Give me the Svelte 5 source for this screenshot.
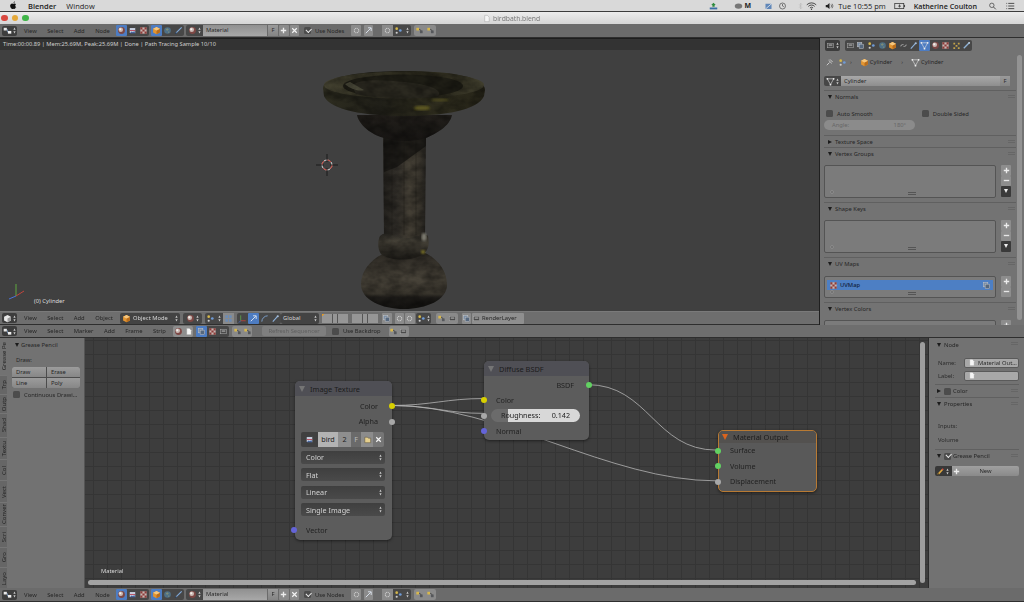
<script>
  const tabs3d = [
    { t: 'Grease Pe', h: 38 },
    { t: 'Trp', h: 19 },
    { t: 'Outp', h: 19 },
    { t: 'Shad', h: 24 },
    { t: 'Textu', h: 22 },
    { t: 'Col', h: 21 },
    { t: 'Vect', h: 22 },
    { t: 'Conver', h: 24 },
    { t: 'Scri', h: 21 },
    { t: 'Gro', h: 20 },
    { t: 'Layo', h: 22 }
  ];
  const propTabs = ['render', 'layers', 'scene', 'globe', 'cube', 'link', 'wrench', 'mesh', 'ball', 'check', 'parts', 'bone'];
  const dropdowns = ['Color', 'Flat', 'Linear', 'Single Image'];
  const menuNode = ['View', 'Select', 'Add', 'Node'];
  const menu3d = ['View', 'Select', 'Add', 'Object'];
  const menuSeq = ['View', 'Select', 'Marker', 'Add', 'Frame', 'Strip'];

  // silhouettes of the birdbath, shared by the fills and the grain clip
  const basePath = 'M361 284C361 268 376 254 394 250H416C434 254 447 268 447 285 447 300 426 309 404 309 382 309 361 300 361 284Z';
  const colPath = 'M383 136H426L425 238H384Z';
  const ringPath = 'M380 236C386 230 392 236 404 238 416 239 424 232 428 236 430 246 428 252 420 256 406 262 388 260 381 254 377 248 378 240 380 236Z';
  const underPath = 'M357 115C360 128 376 136 384 138 396 142 414 142 426 138 436 134 450 126 452 115Z';
  const rimPath = 'M323 88C323 77 360 71 404 71 452 71 485 77 485 90L484 96C478 110 445 116 404 116 365 116 330 110 324 96Z';
</script>

{#snippet icon(k)}
  <svg class="ic" viewBox="0 0 10 10">
    {#if k === 'ball'}
      <circle cx="5" cy="5" r="3.8" fill="#7d4744" /><circle cx="4.200" cy="4.200" r="2.500" fill="#c9b9b4" /><circle cx="3.600" cy="3.600" r="1.100" fill="#f4f0ec" />
    {:else if k === 'img'}
      <rect x="1.5" y="2" width="7" height="6" fill="#c7cede" stroke="#222" stroke-width=".5" /><path d="M2 8l2-2 1.500 1 1.500-1.500L8 8z" fill="#44639e" /><path d="M2 4.500h6v1H2z" fill="#b9485a" />
    {:else if k === 'check'}
      <rect x="1.5" y="1.5" width="7" height="7" fill="#c9b4b0" /><path d="M1.5 1.5h2.3v2.3H1.5zM6.2 1.5h2.3v2.3H6.2zM3.8 3.8h2.4v2.4H3.8zM1.5 6.2h2.3v2.3H1.5zM6.2 6.2h2.3v2.3H6.2z" fill="#8c3c3a" />
    {:else if k === 'cube'}
      <path d="M5 1l3.8 2v4.2L5 9.2 1.2 7.200V3z" fill="#e29532" /><path d="M5 5l3.8-2v4.200L5 9.200z" fill="#b96d1c" /><path d="M5 1l3.800 2L5 5 1.200 3z" fill="#f6c77e" />
    {:else if k === 'globe'}
      <circle cx="5" cy="5" r="3.700" fill="#4e6f86" /><path d="M3 3.500l2-1 1.500 1.500-2 1.500zM5.500 6l2 .5-1.500 1.500z" fill="#7d8d78" />
    {:else if k === 'brush'}
      <path d="M1.500 8.500L8.500 1.500" stroke="#7fa8d8" stroke-width="1.300" /><circle cx="2" cy="8" r="1" fill="#2f3f55" />
    {:else if k === 'plus'}
      <path d="M5 2v6M2 5h6" stroke="#ececec" stroke-width="1.500" />
    {:else if k === 'cross'}
      <path d="M2.500 2.500l5 5M7.500 2.500l-5 5" stroke="#f4f4f4" stroke-width="1.300" />
    {:else if k === 'minus'}
      <path d="M2 5h6" stroke="#e6e6e6" stroke-width="1.500" />
    {:else if k === 'link'}
      <path d="M2 6a2 2 0 0 1 2-2h1M8 4a2 2 0 0 1-2 2H5" fill="none" stroke="#bbb" stroke-width=".9" />
    {:else if k === 'wrench'}
      <path d="M2 8.500L7 3" stroke="#8eb2dc" stroke-width="1.200" /><circle cx="7.500" cy="2.500" r="1.200" fill="#a8c0dc" />
    {:else if k === 'mesh'}
      <path d="M1.500 2h7L5 8.500z" fill="none" stroke="#e0e0e0" stroke-width=".7" /><circle cx="1.500" cy="2" r="1" fill="#eee" /><circle cx="8.500" cy="2" r="1" fill="#eee" /><circle cx="5" cy="8.500" r="1" fill="#eee" />
    {:else if k === 'scene'}
      <circle cx="3" cy="3" r="1.500" fill="#d6b84a" /><circle cx="7" cy="5" r="1.500" fill="#6f9bd6" /><circle cx="3" cy="7.500" r="1.200" fill="#cfcfcf" />
    {:else if k === 'render'}
      <rect x="1.500" y="2.500" width="7" height="5" fill="#4a4a4a" stroke="#aaa" stroke-width=".6" /><rect x="3" y="4" width="4" height="1" fill="#ccc" />
    {:else if k === 'layers'}
      <rect x="1.500" y="1.500" width="5" height="5" fill="#7a8ea6" stroke="#ccc" stroke-width=".5" /><rect x="3.500" y="3.500" width="5" height="5" fill="#56687e" stroke="#ccc" stroke-width=".5" />
    {:else if k === 'parts'}
      <path d="M1.500 2h2v2h-2zM6.500 2h2v2h-2zM4 4.500h2v2H4zM1.500 7h2v2h-2zM6.500 7h2v2h-2z" fill="#c2a24a" />
    {:else if k === 'bone'}
      <path d="M2 8L8 2" stroke="#8fb2d6" stroke-width="1.500" /><circle cx="8" cy="2" r="1" fill="#c4d6e8" />
    {:else if k === 'grid'}
      <path d="M1.500 1.500h3v3h-3zM5.500 1.500h3v3h-3zM1.500 5.500h3v3h-3zM5.500 5.500h3v3h-3z" fill="#6d8cb4" />
    {:else if k === 'axes'}
      <path d="M3 7.500L3 1.500" stroke="#5a9c4a" stroke-width="1" /><path d="M3 7.500h5.500" stroke="#b8423c" stroke-width="1" /><path d="M3 7.500L1 9.500" stroke="#4a6cc4" stroke-width="1" />
    {:else if k === 'arrow'}
      <path d="M2 8L7.500 2.500M4.500 2h3.500v3.500" fill="none" stroke="#dfe6f2" stroke-width="1" />
    {:else if k === 'curve'}
      <path d="M2 8.500C2 5 5 2 8.500 2" fill="none" stroke="#7fa5d2" stroke-width="1" />
    {:else if k === 'gear'}
      <circle cx="5" cy="5" r="2.500" fill="none" stroke="#c8c8c8" stroke-width="1.200" stroke-dasharray="1.200 .6" />
    {:else if k === 'pin'}
      <path d="M2 8l3-3M4 2.500l3.500 3.500M5.500 1.500l3 3" stroke="#ddd" stroke-width=".9" />
    {:else if k === 'yellow'}
      <path d="M1.500 2h3v3h-3z" fill="#d8b84c" /><path d="M5.500 5h3v3h-3z" fill="#56585c" /><path d="M4.500 3.500L7 5" stroke="#222" stroke-width=".6" />
    {:else if k === 'folder'}
      <path d="M2 2.500h3l1 1h2.500V8.500H2z" fill="#e5cf8d" stroke="#4a4030" stroke-width=".5" />
    {:else if k === 'pencil'}
      <path d="M2 8.500L7.500 2.500" stroke="#dca63f" stroke-width="1.800" /><path d="M7 3l1-1" stroke="#cc4444" stroke-width="1.800" /><path d="M2 8.500l1-1" stroke="#222" stroke-width="1.300" />
    {:else if k === 'page'}
      <path d="M3 1.500h3l2 2v5H3z" fill="#f5f5f5" stroke="#888" stroke-width=".4" />
    {:else}
      <rect x="2" y="2" width="6" height="6" fill="#c6c6c6" />
    {/if}
  </svg>
{/snippet}

{#snippet updown()}
  <svg class="ud" viewBox="0 0 4 10"><path d="M2 .8L3.600 3.800H.4zM2 9.200L.4 6.200H3.600z" fill="currentColor" /></svg>
{/snippet}

{#snippet editorBtn(k)}
  <div class="edbtn">
    <svg class="edic" viewBox="0 0 10 10">
      {#if k === 'view'}
        <path d="M5 1l3.800 2v4.200L5 9.200 1.200 7.200V3z" fill="#e8e8e8" /><path d="M5 5l3.800-2v4.200L5 9.200z" fill="#9a9a9a" />
      {:else}
        <path d="M.8 2h3.500v3H.8z" fill="#e8e8e8" /><path d="M5.500 5.500H9.200v3H5.500z" fill="#f0f0f0" /><path d="M4.300 3.500C6 3.500 4 7 5.500 7" fill="none" stroke="#8fb4df" stroke-width=".8" />
      {/if}
    </svg>
    {@render updown()}
  </div>
{/snippet}

{#snippet group(items, active = -1, cls = '')}
  <div class="grp {cls}">
    {#each items as it, i}
      <div class="ib" class:on={i === active}>{@render icon(it)}</div>
    {/each}
  </div>
{/snippet}

{#snippet nodeHeader()}
  <div class="hdr">
    {@render editorBtn('node')}
    <div class="menu">
      {#each menuNode as m}<span>{m}</span>{/each}
    </div>
    {@render group(['ball', 'img', 'check'], 0)}
    {@render group(['cube', 'globe', 'brush'], 0, 'g-tree')}
    <div class="drop-ic g-mat">{@render icon('ball')}{@render updown()}</div>
    <div class="namefield">Material</div>
    <div class="fbtn">F</div>
    <div class="lb">{@render icon('plus')}</div>
    <div class="lb">{@render icon('cross')}</div>
    <div class="check on g-usenodes"></div>
    <span class="lbl">Use Nodes</span>
    <div class="lb g-a">{@render icon('gear')}</div>
    <div class="lb g-b">{@render icon('arrow')}</div>
    <div class="grp g-c">
      <div class="ib lite">{@render icon('gear')}</div>
      <div class="ib">{@render icon('scene')}</div>
      <div class="ud-wrap">{@render updown()}</div>
    </div>
    {@render group(['yellow', 'yellow'], -1, 'g-d lite')}
  </div>
{/snippet}

<div class="app">
  <div class="mac">
    <svg class="apple" viewBox="0 0 10 12"><path d="M7 .3c0 1-.9 2.100-2 2 0-1 .9-2 2-2zM8.300 8.600c-.5 1.100-1.200 2.400-2.200 2.400-.6 0-.8-.4-1.500-.4s-1 .4-1.500.4C1.500 11 .2 8.400.2 6.500.2 4.400 1.600 3.100 3 3.100c.7 0 1.200.4 1.700.4.400 0 1-.5 1.900-.4.500 0 1.400.2 2 1.100-1.700 1-1.400 3.500.7 4.400z" fill="#111" /></svg>
    <b>Blender</b>
    <span>Window</span>
    <div class="mac-right">
      <svg class="m12" viewBox="0 0 12 10"><path d="M6 .5l3 3H7.500V6h-3V3.500H3z" fill="#2e8b3d" /><path d="M1 7h10v2.500H1z" fill="#3b6ea5" /></svg>
      <svg class="m12 cloud" viewBox="0 0 12 10"><ellipse cx="6" cy="5" rx="5" ry="3.500" fill="#777" /></svg>
      <span class="mm">M</span>
      <svg class="m12 mm2" viewBox="0 0 12 10"><rect x="2" y="2" width="8" height="7" fill="#5f86b8" /><path d="M2 9l8-7" stroke="#eee" /></svg>
      <svg class="m12 mm3" viewBox="0 0 12 12"><circle cx="6" cy="6" r="4.500" fill="none" stroke="#444" /><path d="M6 3v3l2 1" fill="none" stroke="#444" /></svg>
      <svg class="m12 mm4" viewBox="0 0 12 12"><path d="M4 3.500l4 5-2 2v-9l2 2-4 5" fill="none" stroke="#bbb" /></svg>
      <svg class="m12 mm5" viewBox="0 0 14 10"><path d="M1 3.500a8.500 8.500 0 0 1 12 0M3 5.500a5.500 5.500 0 0 1 8 0M5 7.500a2.800 2.800 0 0 1 4 0" fill="none" stroke="#222" /><circle cx="7" cy="9" r=".8" fill="#222" /></svg>
      <svg class="m12 mm6" viewBox="0 0 12 10"><path d="M1 3.500h2L6 1v8L3 6.500H1z" fill="#222" /><path d="M8 3a3 3 0 0 1 0 4M9.500 2a5 5 0 0 1 0 6" fill="none" stroke="#222" stroke-width=".7" /></svg>
      <span class="clock">Tue 10:55 pm</span>
      <svg class="m12 batt" viewBox="0 0 16 10"><rect x="1" y="1.500" width="12" height="7" fill="none" stroke="#333" /><path d="M8 2L5.500 5.500H7.500L6.500 8 9.500 4.500H7.500z" fill="#222" /><rect x="13.500" y="3.500" width="1.200" height="3" fill="#333" /></svg>
      <b class="who">Katherine Coulton</b>
      <svg class="m12 srch" viewBox="0 0 12 12"><circle cx="5" cy="5" r="3.300" fill="none" stroke="#333" /><path d="M7.500 7.500L11 11" stroke="#333" stroke-width="1.200" /></svg>
      <svg class="m12 lst" viewBox="0 0 12 10"><path d="M3 1.500h8M3 5h8M3 8.500h8M.5 1.500h1M.5 5h1M.5 8.500h1" stroke="#222" /></svg>
    </div>
  </div>

  <div class="title">
    <i class="tl red"></i><i class="tl yel"></i><i class="tl grn"></i>
    <div class="docname">{@render icon('page')}<span>birdbath.blend</span></div>
  </div>

  {@render nodeHeader()}

  <div class="upper">
    <div class="view-col">
      <div class="viewport">
        <svg class="scene" viewBox="0 50 820 261">
          <defs>
            <filter id="grain" filterUnits="userSpaceOnUse" x="315" y="65" width="180" height="250" color-interpolation-filters="sRGB">
              <feTurbulence type="fractalNoise" baseFrequency="0.08 0.12" numOctaves="3" seed="7" />
              <feColorMatrix type="matrix" values="0 0 0 0 0  0 0 0 0 0  0 0 0 0 0  .7 0 0 0 -.2" />
            </filter>
            <clipPath id="bath">
              <path d={basePath} /><path d={colPath} /><path d={ringPath} /><path d={underPath} /><path d={rimPath} />
            </clipPath>
            <filter id="soft"><feGaussianBlur stdDeviation="1.300" /></filter>
            <linearGradient id="col" x1="0" x2="1" y1="0" y2="0">
              <stop offset="0" stop-color="#22201c" /><stop offset=".3" stop-color="#302d28" /><stop offset=".62" stop-color="#443f35" /><stop offset=".85" stop-color="#38342c" /><stop offset="1" stop-color="#262420" />
            </linearGradient>
            <linearGradient id="base" x1="0" x2="0" y1="0" y2="1">
              <stop offset="0" stop-color="#282520" /><stop offset=".5" stop-color="#484339" /><stop offset=".74" stop-color="#38342c" /><stop offset=".8" stop-color="#1e1c19" /><stop offset="1" stop-color="#131210" />
            </linearGradient>
            <linearGradient id="ring" x1="0" x2="0" y1="0" y2="1">
              <stop offset="0" stop-color="#262420" /><stop offset=".3" stop-color="#464238" /><stop offset="1" stop-color="#1d1b17" />
            </linearGradient>
            <linearGradient id="rim" x1="0" x2="1" y1="0" y2="0">
              <stop offset="0" stop-color="#2e2d20" /><stop offset=".35" stop-color="#201f18" /><stop offset=".7" stop-color="#2f2d1e" /><stop offset="1" stop-color="#262418" />
            </linearGradient>
            <linearGradient id="under" x1="0" x2="0" y1="0" y2="1">
              <stop offset="0" stop-color="#221f1b" /><stop offset="1" stop-color="#161412" />
            </linearGradient>
            <linearGradient id="face" x1="0" x2="1" y1="0" y2="0">
              <stop offset="0" stop-color="#42402f" /><stop offset=".4" stop-color="#323022" /><stop offset=".7" stop-color="#28261a" /><stop offset="1" stop-color="#403e2d" />
            </linearGradient>
          </defs>

          <path d={basePath} fill="url(#base)" />
          <path d={colPath} fill="url(#col)" />
          <path d="M392 140V235M404 140V235M416 140V235" stroke="#1e1c18" stroke-width=".8" opacity=".5" />
          <path d="M384 136H426V146L397 167 384 172Z" fill="#161412" opacity=".75" />
          <path d={ringPath} fill="url(#ring)" />
          <path d={underPath} fill="url(#under)" />
          <path d={rimPath} fill="url(#rim)" />
          <ellipse cx="404" cy="85" rx="80" ry="13.500" fill="url(#face)" />
          <ellipse cx="403" cy="86" rx="60" ry="11.500" fill="#1e1d15" />
          <path d="M352 86C358 78 385 80 405 82 428 84 444 90 438 96 420 100 375 99 356 94Z" fill="#2b2920" />
          <path d="M345 84C349 88 358 92 364 90L350 82Z" fill="#4a4939" />
          <g clip-path="url(#bath)">
            <rect x="315" y="65" width="180" height="250" fill="#000" filter="url(#grain)" />
          </g>
          <ellipse cx="422" cy="108" rx="8" ry="2.500" fill="#5c5720" filter="url(#soft)" />
          <ellipse cx="440" cy="100" rx="9" ry="1.500" fill="#5c5720" filter="url(#soft)" opacity=".7" />
          <ellipse cx="424" cy="237" rx="2.500" ry="4" fill="#7c7a70" filter="url(#soft)" />
          <ellipse cx="423" cy="252" rx="1.800" ry="1.800" fill="#8d8328" filter="url(#soft)" />

          <g fill="none">
            <circle cx="327" cy="165" r="5" stroke="#ddd" stroke-width="1" />
            <circle cx="327" cy="165" r="5" stroke="#c0342c" stroke-width="1" stroke-dasharray="3.900 3.900" />
            <path d="M316 165h8M330 165h8M327 154v8M327 168v8" stroke="#111" stroke-width=".8" />
          </g>

          <g fill="none" stroke-width="1">
            <path d="M16 296V284" stroke="#5fa83f" />
            <path d="M16 296L24 291" stroke="#c2453d" />
            <path d="M16 296L9 299" stroke="#4a72d8" />
          </g>
        </svg>
        <div class="info">Time:00:00.89 | Mem:25.69M, Peak:25.69M | Done | Path Tracing Sample 10/10</div>
        <div class="objname">(0) Cylinder</div>
      </div>
      <div class="hdr hdr3d">
        {@render editorBtn('view')}
        <div class="menu">
          {#each menu3d as m}<span>{m}</span>{/each}
        </div>
        <div class="darkdrop g-mode">{@render icon('cube')}<span>Object Mode</span>{@render updown()}</div>
        <div class="drop-ic g-shade">{@render icon('ball')}{@render updown()}</div>
        <div class="grp g-pivot">
          <div class="ib">{@render icon('scene')}</div>
          <div class="ud-wrap">{@render updown()}</div>
          <div class="ib lite">{@render icon('grid')}</div>
        </div>
        <div class="grp g-manip">
          <div class="ib">{@render icon('axes')}</div>
          <div class="ib on">{@render icon('arrow')}</div>
          <div class="ib">{@render icon('curve')}</div>
          <div class="ib">{@render icon('wrench')}</div>
        </div>
        <div class="darkdrop g-global"><span>Global</span>{@render updown()}</div>
        <div class="layers g-l1">{#each Array(10) as _}<i></i>{/each}</div>
        <div class="layers g-l2">{#each Array(10) as _}<i></i>{/each}</div>
        <div class="lb g-s1">{@render icon('layers')}</div>
        <div class="lb g-s2">{@render icon('gear')}</div>
        <div class="lb g-s3">{@render icon('gear')}</div>
        <div class="drop-ic g-s4">{@render icon('scene')}{@render updown()}</div>
        {@render group(['yellow', 'render'], -1, 'g-s5 lite')}
        <div class="lb g-s6">{@render icon('layers')}</div>
        <div class="renderlayer">{@render icon('render')}<span>RenderLayer</span></div>
      </div>
    </div>

    <aside class="props">
      <div class="prop-tabs">
        <div class="edbtn prop-ed">{@render icon('render')}{@render updown()}</div>
        <div class="grp tabs12">
          {#each propTabs as t}
            <div class="ib" class:on={t === 'mesh'}>{@render icon(t)}</div>
          {/each}
        </div>
      </div>
      <div class="crumbs">
        <span class="pin">{@render icon('pin')}</span>
        {@render icon('scene')}
        <span class="caret">›</span>
        <span class="cr1">{@render icon('cube')}Cylinder</span>
        <span class="caret c2">›</span>
        <span class="cr2">{@render icon('mesh')}Cylinder</span>
      </div>
      <div class="meshfield">
        <div class="drop-ic m-ic">{@render icon('mesh')}{@render updown()}</div>
        <div class="mf-name">Cylinder</div>
        <div class="fbtn">F</div>
      </div>

      <section class="sec">
        <div class="sec-h"><i class="tri"></i>Normals<u class="grip"></u></div>
        <div class="body normals">
          <div class="checks">
            <label><i class="check"></i>Auto Smooth</label>
            <label class="ds"><i class="check"></i>Double Sided</label>
          </div>
          <div class="slider"><span>Angle:</span><span>180°</span></div>
        </div>
      </section>
      <section class="sec">
        <div class="sec-h closed"><i class="tri right"></i>Texture Space<u class="grip"></u></div>
      </section>
      <section class="sec">
        <div class="sec-h"><i class="tri"></i>Vertex Groups<u class="grip"></u></div>
        <div class="body listrow">
          <div class="listbox"><i class="dot"></i><i class="hand"></i></div>
          <div class="side"><div class="sb">{@render icon('plus')}</div><div class="sb">{@render icon('minus')}</div><div class="sb dk"><i class="tri white"></i></div></div>
        </div>
      </section>
      <section class="sec">
        <div class="sec-h"><i class="tri"></i>Shape Keys<u class="grip"></u></div>
        <div class="body listrow">
          <div class="listbox"><i class="dot"></i><i class="hand"></i></div>
          <div class="side"><div class="sb">{@render icon('plus')}</div><div class="sb">{@render icon('minus')}</div><div class="sb dk"><i class="tri white"></i></div></div>
        </div>
      </section>
      <section class="sec">
        <div class="sec-h"><i class="tri"></i>UV Maps<u class="grip"></u></div>
        <div class="body listrow uv">
          <div class="listbox short">
            <div class="uvrow">{@render icon('check')}<span>UVMap</span>{@render icon('layers')}</div>
            <i class="dot"></i><i class="hand"></i>
          </div>
          <div class="side"><div class="sb">{@render icon('plus')}</div><div class="sb">{@render icon('minus')}</div></div>
        </div>
      </section>
      <section class="sec">
        <div class="sec-h"><i class="tri"></i>Vertex Colors<u class="grip"></u></div>
        <div class="body listrow">
          <div class="listbox"></div>
          <div class="side"><div class="sb">{@render icon('plus')}</div></div>
        </div>
      </section>
      <div class="pscroll"></div>
    </aside>
  </div>

  <div class="hdr hdr-seq">
    {@render editorBtn('node')}
    <div class="menu">
      {#each menuSeq as m}<span>{m}</span>{/each}
    </div>
    {@render group(['ball', 'page'], -1, 'q1')}
    {@render group(['layers', 'check', 'render'], 0, 'q2')}
    {@render group(['yellow', 'yellow'], -1, 'q3 lite')}
    <div class="refresh">Refresh Sequencer</div>
    <div class="check q4"></div>
    <span class="lbl">Use Backdrop</span>
    {@render group(['yellow', 'render'], -1, 'q5 lite')}
  </div>

  <div class="editor">
    <aside class="shelf">
      <div class="vtabs">
        {#each tabs3d as tab, i}
          <div class="vtab" class:active={i === 0} style="height: {tab.h}px"><span>{tab.t}</span></div>
        {/each}
      </div>
      <div class="shelf-body">
        <div class="sh-title"><i class="tri"></i>Grease Pencil</div>
        <div class="sh-draw">Draw:</div>
        <div class="btn4">
          <div>Draw</div><div>Erase</div><div>Line</div><div>Poly</div>
        </div>
        <label class="cont"><i class="check"></i>Continuous Drawi...</label>
      </div>
    </aside>

    <div class="canvas">
      <svg class="wires" viewBox="85 338 843 252">
        <g fill="none" stroke="#b4b4b4" stroke-width=".8">
          <path d="M391 406C430 406 446 399 484 399" />
          <path d="M391 406C430 406 446 414 484 414" />
          <path d="M391 406C500 406 609 482 718 482" />
          <path d="M588 385C650 385 656 451 718 451" />
        </g>
      </svg>

      <div class="node n-img">
        <div class="n-h"><i class="tri grey"></i>Image Texture</div>
        <div class="n-out first">Color<i class="sock yellow"></i></div>
        <div class="n-out">Alpha<i class="sock grey"></i></div>
        <div class="imgrow">
          <div class="ir-ic">{@render icon('img')}</div>
          <div class="ir-name">bird</div>
          <div class="ir-2">2</div>
          <div class="ir-f">F</div>
          <div class="ir-fo">{@render icon('folder')}</div>
          <div class="ir-x">{@render icon('cross')}</div>
        </div>
        {#each dropdowns as d}
          <div class="ndrop"><span>{d}</span>{@render updown()}</div>
        {/each}
        <div class="n-in vec">Vector<i class="sock blue"></i></div>
      </div>

      <div class="node n-dif">
        <div class="n-h"><i class="tri grey"></i>Diffuse BSDF</div>
        <div class="n-out first">BSDF<i class="sock green"></i></div>
        <div class="n-in">Color<i class="sock yellow"></i></div>
        <div class="n-in">
          <div class="rough"><span>Roughness:</span><span>0.142</span></div>
          <i class="sock grey"></i>
        </div>
        <div class="n-in">Normal<i class="sock blue"></i></div>
      </div>

      <div class="node n-mat">
        <div class="n-h"><i class="tri orange"></i>Material Output</div>
        <div class="n-in">Surface<i class="sock green"></i></div>
        <div class="n-in">Volume<i class="sock green"></i></div>
        <div class="n-in">Displacement<i class="sock grey"></i></div>
      </div>

      <div class="matlabel">Material</div>
      <div class="hscroll"></div>
      <div class="vscroll"></div>
    </div>

    <aside class="nside">
      <div class="ns-h"><i class="tri"></i>Node<u class="grip"></u></div>
      <div class="ns-row first"><span>Name:</span><div class="ns-f">{@render icon('page')}<span>Material Out...</span></div></div>
      <div class="ns-row"><span>Label:</span><div class="ns-f">{@render icon('page')}</div></div>
      <div class="ns-sec"><i class="tri right"></i><i class="check"></i>Color<u class="grip"></u></div>
      <div class="ns-sec"><i class="tri"></i>Properties<u class="grip"></u></div>
      <div class="ns-txt first">Inputs:</div>
      <div class="ns-txt">Volume</div>
      <div class="ns-sec gp"><i class="tri"></i><i class="check on"></i>Grease Pencil<u class="grip"></u></div>
      <div class="ns-new">
        <div class="pn">{@render icon('pencil')}{@render updown()}</div>
        <div class="nw">{@render icon('plus')}<span>New</span></div>
      </div>
    </aside>
  </div>

  {@render nodeHeader()}
</div>

<style>
  :global(body) {
    margin: 0;
    background: #404040;
  }

  .app {
    width: 1024px;
    height: 602px;
    overflow: hidden;
    display: flex;
    flex-direction: column;
    font-family: 'Noto Sans', sans-serif;
    font-size: 5.8px;
    color: #262626;
    filter: blur(0.4px);
  }

  .ic {
    width: 9px;
    height: 9px;
    flex: none;
    display: block;
  }
  .ud {
    width: 3px;
    height: 7px;
    flex: none;
    color: #ccc;
  }

  /* mac chrome */
  .mac {
    height: 11px;
    flex: none;
    display: flex;
    align-items: center;
    gap: 10px;
    padding-left: 10px;
    background: #d9d9d9;
    border-bottom: 1px solid #3c3c3c;
    font-family: 'Open Sans', sans-serif;
    font-size: 7.500px;
    color: #222;
  }
  .mac b {
    font-weight: 600;
  }
  .apple {
    width: 7px;
    height: 9px;
    margin-right: 1px;
  }
  .mac-right {
    margin-left: auto;
    display: flex;
    align-items: center;
    height: 11px;
  }
  .m12 {
    width: 9px;
    height: 8px;
    flex: none;
  }
  .cloud {
    margin-left: 16px;
  }
  .mm {
    margin-left: 2px;
    font-weight: 700;
    font-size: 7px;
  }
  .mm2 {
    margin-left: 13px;
  }
  .mm3 {
    margin-left: 5px;
  }
  .mm4 {
    margin-left: 9px;
  }
  .mm5 {
    margin-left: 1px;
    width: 11px;
  }
  .mm6 {
    margin-left: 8px;
  }
  .clock {
    margin-left: 4px;
  }
  .batt {
    margin-left: 8px;
    width: 12px;
  }
  .who {
    margin-left: 8px;
    font-size: 7.200px;
  }
  .srch {
    margin-left: 11px;
  }
  .lst {
    margin-left: 9px;
    margin-right: 9px;
  }

  .title {
    height: 12px;
    flex: none;
    display: flex;
    align-items: center;
    position: relative;
    background: linear-gradient(#ececec, #d5d5d5);
    padding-left: 1px;
    gap: 4px;
    color: #777;
    font-size: 6.4px;
    font-family: 'Open Sans', sans-serif;
  }
  .tl {
    width: 6.500px;
    height: 6.500px;
    border-radius: 50%;
    display: block;
  }
  .red {
    background: #d9483f;
  }
  .yel {
    background: #e5a93a;
  }
  .grn {
    background: #3fb548;
  }
  .docname {
    position: absolute;
    left: 482px;
    display: flex;
    align-items: center;
    gap: 2px;
    font-size: 6.800px;
  }

  /* headers */
  .hdr {
    height: 14px;
    flex: none;
    display: flex;
    align-items: center;
    padding-left: 2px;
    background: #6b6b6b;
    border-bottom: 1px solid #2e2e2e;
    box-sizing: border-box;
    color: #262626;
  }
  .hdr3d {
    height: 14px;
    background: #6e6e6e;
    border-top: 1px solid #7a7a7a;
  }
  .hdr-seq {
    height: 13px;
    background: #6e6e6e;
  }
  .edbtn {
    width: 15px;
    height: 10px;
    flex: none;
    display: flex;
    align-items: center;
    justify-content: center;
    gap: 1px;
    background: #3d3d3d;
    border-radius: 2px;
  }
  .edic {
    width: 9px;
    height: 9px;
  }
  .menu {
    display: flex;
    margin-left: 7px;
    gap: 10.500px;
    width: 92px;
    flex: none;
  }
  .hdr-seq .menu {
    width: 149px;
  }
  .grp {
    display: flex;
    flex: none;
    height: 11px;
    align-items: center;
    background: #474747;
    border-radius: 2px;
  }
  .grp.lite,
  .ib.lite {
    background: #8a8a8a;
  }
  .ib {
    width: 11px;
    height: 11px;
    display: flex;
    align-items: center;
    justify-content: center;
    flex: none;
  }
  .ib.on {
    background: #4d7cc2;
    border-radius: 1px;
  }
  .ud-wrap {
    display: flex;
    align-items: center;
    justify-content: center;
    width: 7px;
  }
  .g-tree {
    margin-left: 2px;
  }
  .drop-ic {
    height: 11px;
    display: flex;
    align-items: center;
    justify-content: center;
    gap: 1px;
    background: #474747;
    flex: none;
    border-radius: 2px;
  }
  .g-mat {
    margin-left: 2px;
    width: 17px;
    border-radius: 2px 0 0 2px;
  }
  .namefield {
    width: 64px;
    height: 11px;
    box-sizing: border-box;
    padding-left: 3px;
    line-height: 11px;
    background: linear-gradient(#909090, #a8a8a8);
    color: #2a2a2a;
    flex: none;
  }
  .fbtn {
    width: 10px;
    height: 11px;
    margin-left: 1px;
    background: linear-gradient(#9a9a9a, #858585);
    text-align: center;
    line-height: 11px;
    flex: none;
    color: #2a2a2a;
  }
  .lb {
    width: 9.500px;
    height: 11px;
    display: flex;
    align-items: center;
    justify-content: center;
    flex: none;
    background: #8b8b8b;
    margin-left: 1px;
    border-radius: 1px;
  }
  .check {
    width: 7px;
    height: 7px;
    display: block;
    background: #4c4c4c;
    border-radius: 1.500px;
    flex: none;
    position: relative;
  }
  .check.on::after {
    content: '';
    position: absolute;
    left: 1.500px;
    top: .5px;
    width: 4px;
    height: 2.500px;
    border-left: 1.200px solid #eee;
    border-bottom: 1.200px solid #eee;
    transform: rotate(-45deg);
  }
  .g-usenodes {
    margin-left: 5px;
  }
  .lbl {
    margin-left: 4px;
    flex: none;
  }
  .g-a {
    margin-left: 7px;
  }
  .g-b {
    margin-left: 3px;
  }
  .g-c {
    margin-left: 9px;
  }
  .g-d {
    margin-left: 3px;
  }

  .upper {
    height: 287px;
    flex: none;
    display: flex;
  }
  .view-col {
    width: 820px;
    flex: none;
    display: flex;
    flex-direction: column;
    border-right: 1px solid #1f1f1f;
    box-sizing: border-box;
  }
  .viewport {
    flex: 1;
    position: relative;
    background: #404040;
  }
  .scene {
    position: absolute;
    left: 0;
    top: 12px;
    width: 820px;
    height: 261px;
  }
  .info {
    height: 12px;
    background: #333;
    border-top: 1px solid #1d1d1d;
    box-sizing: border-box;
    padding-left: 3px;
    line-height: 10px;
    color: #cfcfcf;
    font-size: 5.700px;
    position: relative;
    white-space: nowrap;
  }
  .objname {
    position: absolute;
    left: 34px;
    bottom: 6px;
    color: #dcdcdc;
  }
  .darkdrop {
    height: 11px;
    display: flex;
    align-items: center;
    padding: 0 2px;
    gap: 2px;
    background: #434343;
    color: #d6d6d6;
    box-sizing: border-box;
    flex: none;
    border-radius: 2px;
  }
  .darkdrop span {
    flex: 1;
  }
  .g-mode {
    width: 60px;
  }
  .hdr3d .menu {
    width: 96px;
  }
  .g-shade {
    width: 19px;
    margin-left: 3px;
  }
  .g-pivot {
    margin-left: 3px;
  }
  .g-manip {
    margin-left: 3px;
  }
  .g-global {
    width: 38px;
  }
  .layers {
    width: 26px;
    height: 9px;
    display: grid;
    grid-template-columns: repeat(5, 1fr);
    grid-template-rows: 1fr 1fr;
    gap: .5px;
    flex: none;
    background: #565656;
    position: relative;
  }
  .layers i {
    background: #969696;
  }
  .g-l1 i:first-child {
    background: linear-gradient(135deg, #e09a2a 25%, #969696 25%);
  }
  .g-l1 {
    margin-left: 3px;
  }
  .g-l2 {
    margin-left: 4px;
  }
  .g-s1 {
    margin-left: 4px;
  }
  .g-s2 {
    margin-left: 3px;
  }
  .g-s3 {
    margin-left: 1px;
  }
  .g-s4 {
    width: 15px;
    margin-left: 1px;
  }
  .g-s5 {
    margin-left: 5px;
  }
  .g-s6 {
    margin-left: 4px;
  }
  .renderlayer {
    width: 52px;
    height: 11px;
    margin-left: 1px;
    display: flex;
    align-items: center;
    gap: 1px;
    background: #8f8f8f;
    border-radius: 1px;
    flex: none;
  }

  /* properties */
  .props {
    flex: 1;
    position: relative;
    overflow: hidden;
    background: #737373;
    padding: 2px 6px 0 4px;
    color: #262626;
    box-sizing: border-box;
  }
  .prop-tabs {
    display: flex;
    height: 11px;
    gap: 5px;
    padding-left: 1px;
  }
  .prop-ed {
    height: 11px;
  }
  .tabs12 .ib {
    width: 10.600px;
  }
  .crumbs {
    display: flex;
    align-items: center;
    height: 12px;
    margin-top: 5px;
    padding-left: 1px;
    gap: 3px;
  }
  .pin {
    margin-right: 1px;
  }
  .caret {
    color: #333;
  }
  .cr1,
  .cr2 {
    display: flex;
    align-items: center;
    gap: 1px;
    margin-left: 5px;
  }
  .c2 {
    margin-left: 6px;
  }
  .cr2 {
    margin-left: 5px;
  }
  .meshfield {
    display: flex;
    height: 10px;
    margin-top: 8px;
  }
  .m-ic {
    width: 17px;
    height: 10px;
    border-radius: 2px 0 0 2px;
  }
  .mf-name {
    flex: 1;
    padding-left: 3px;
    line-height: 10px;
    background: linear-gradient(#a8a8a8, #8e8e8e);
  }
  .meshfield .fbtn {
    height: 10px;
    line-height: 10px;
    margin: 0 8px 0 0;
  }
  .sec {
    border-top: 1px solid #606060;
    margin-right: 2px;
  }
  .meshfield + .sec {
    margin-top: 4px;
  }
  .sec-h {
    height: 12px;
    line-height: 12px;
    display: flex;
    align-items: center;
    gap: 2px;
    padding-left: 3px;
    color: #262626;
    position: relative;
  }
  .sec-h.closed {
    height: 11px;
  }
  .tri {
    width: 0;
    height: 0;
    display: block;
    flex: none;
    margin: 0 1px;
    border-left: 2.500px solid transparent;
    border-right: 2.500px solid transparent;
    border-top: 4px solid #1c1c1c;
  }
  .tri.right {
    border-top: 2.500px solid transparent;
    border-bottom: 2.500px solid transparent;
    border-left: 4px solid #1c1c1c;
    border-right: 0;
  }
  .tri.white {
    border-top-color: #eee;
  }
  .tri.grey {
    border-top-color: #757575;
    border-left-width: 3.500px;
    border-right-width: 3.500px;
    border-top-width: 6px;
  }
  .tri.orange {
    border-top-color: #d9641e;
    border-left-width: 3.500px;
    border-right-width: 3.500px;
    border-top-width: 6px;
  }
  .grip {
    position: absolute;
    right: 1px;
    top: 4px;
    width: 7px;
    height: 4px;
    background: repeating-linear-gradient(#666 0 1px, transparent 1px 2px);
  }
  .body {
    padding: 5px 0 4px;
  }
  .normals {
    padding: 7px 0 5px;
  }
  .checks {
    display: flex;
    height: 7px;
    padding-left: 2px;
    position: relative;
  }
  .checks label,
  .cont {
    display: flex;
    align-items: center;
    gap: 4px;
  }
  .checks .ds {
    margin-left: 49px;
  }
  .slider {
    width: 91px;
    height: 10px;
    margin-top: 3px;
    box-sizing: border-box;
    padding: 0 9px 0 8px;
    display: flex;
    justify-content: space-between;
    line-height: 10px;
    color: #666;
    background: #8b8b8b;
    border-radius: 5px;
  }
  .listrow {
    display: flex;
    gap: 5px;
  }
  .uv {
    padding-top: 6px;
  }
  .listbox {
    width: 172px;
    height: 33px;
    flex: none;
    box-sizing: border-box;
    background: #7b7b7b;
    border: 1px solid #545454;
    border-radius: 2px;
    position: relative;
  }
  .listbox.short {
    height: 22px;
    padding: 3px 2px;
  }
  .dot {
    position: absolute;
    left: 5px;
    bottom: 3px;
    width: 4px;
    height: 4px;
    border-radius: 50%;
    background: #6c6c6c;
    border: .5px solid #8c8c8c;
    box-sizing: border-box;
  }
  .hand {
    position: absolute;
    left: 83px;
    bottom: 2px;
    width: 8px;
    height: 3px;
    border-top: 1px solid #555;
    border-bottom: 1px solid #555;
    box-sizing: border-box;
  }
  .uvrow {
    height: 10px;
    display: flex;
    align-items: center;
    gap: 2px;
    padding: 0 2px;
    background: #4d7fc4;
    color: #10203a;
    font-weight: 500;
  }
  .uvrow span {
    flex: 1;
  }
  .side {
    width: 10px;
    flex: none;
    display: flex;
    flex-direction: column;
  }
  .sb {
    height: 10.500px;
    display: flex;
    align-items: center;
    justify-content: center;
    background: #8d8d8d;
    border-radius: 1px;
  }
  .sb.dk {
    background: #3a3a3a;
  }
  .pscroll {
    position: absolute;
    right: 2px;
    top: 17px;
    width: 5px;
    height: 265px;
    background: #939393;
    border-radius: 3px;
  }

  /* node editor */
  .editor {
    flex: 1;
    min-height: 0;
    display: flex;
  }
  .shelf {
    width: 85px;
    flex: none;
    display: flex;
    background: #727272;
    border-right: 1px solid #555;
    box-sizing: border-box;
  }
  .vtabs {
    width: 7px;
    flex: none;
    background: #666;
  }
  .vtab {
    display: flex;
    align-items: center;
    justify-content: center;
    overflow: hidden;
    color: #262626;
    border-bottom: 1px solid #757575;
    box-sizing: border-box;
  }
  .vtab.active {
    background: #727272;
  }
  .vtab span {
    writing-mode: vertical-rl;
    transform: rotate(180deg);
    white-space: nowrap;
    font-size: 6px;
  }
  .shelf-body {
    flex: 1;
    padding-left: 5px;
  }
  .sh-title {
    height: 12px;
    margin-top: 1px;
    display: flex;
    align-items: center;
    padding-left: 2px;
    gap: 1px;
  }
  .sh-draw {
    margin-top: 5px;
    padding-left: 4px;
    height: 11px;
    line-height: 9px;
  }
  .btn4 {
    width: 68px;
    height: 21px;
    display: grid;
    grid-template-columns: 34px 34px;
    grid-template-rows: 1fr 1fr;
    background: #4c4c4c;
    gap: 1px;
    border-radius: 2px;
    overflow: hidden;
  }
  .btn4 div {
    padding-left: 4px;
    line-height: 10px;
    background: linear-gradient(#9c9c9c, #878787);
  }
  .cont {
    margin: 2px 0 0 1px;
    height: 9px;
  }

  .canvas {
    flex: 1;
    position: relative;
    background-color: #3d3d3d;
    background-image: linear-gradient(#353535 1px, transparent 1px), linear-gradient(90deg, #353535 1px, transparent 1px);
    background-size: 14px 14px;
    background-position: 8px 2px;
  }
  .wires {
    position: absolute;
    inset: 0;
    width: 100%;
    height: 100%;
  }
  .node {
    position: absolute;
    box-sizing: border-box;
    border-radius: 5px;
    background: #5c5c5c;
    box-shadow: 0 1px 3px rgba(0, 0, 0, 0.5);
    font-size: 7.200px;
    color: #222;
  }
  .n-img {
    left: 210px;
    top: 43px;
    width: 97px;
    height: 159px;
  }
  .n-dif {
    left: 399px;
    top: 23px;
    width: 105px;
    height: 79px;
  }
  .n-mat {
    left: 633px;
    top: 92px;
    width: 99px;
    height: 62px;
    background: #595959;
    border: 1px solid #b87a33;
  }
  .n-h {
    height: 15px;
    display: flex;
    align-items: center;
    gap: 4px;
    padding-left: 3px;
    background: #4f4f55;
    border-radius: 5px 5px 0 0;
    color: #1c1c1c;
    font-size: 7.400px;
  }
  .n-mat .n-h {
    height: 12px;
    background: #53514f;
    padding-left: 2px;
    border-radius: 4px 4px 0 0;
  }
  .n-out,
  .n-in {
    height: 15px;
    line-height: 15px;
    position: relative;
  }
  .n-out {
    text-align: right;
    padding-right: 15px;
  }
  .n-in {
    padding-left: 12px;
  }
  .n-out.first {
    margin-top: 1.500px;
  }
  .n-img .n-out {
    padding-right: 14px;
    height: 15.500px;
    line-height: 15.500px;
  }
  .n-img .n-out.first {
    margin-top: 2.500px;
  }
  .n-mat .n-in {
    height: 15.500px;
    line-height: 15.500px;
    padding-left: 11px;
  }
  .sock {
    position: absolute;
    top: 50%;
    width: 6px;
    height: 6px;
    margin-top: -3px;
    border-radius: 50%;
    display: block;
  }
  .n-in .sock {
    left: -3px;
  }
  .n-out .sock {
    right: -3px;
  }
  .n-mat .n-in .sock {
    left: -4px;
  }
  .sock.yellow {
    background: #d8d000;
  }
  .sock.grey {
    background: #a8a8a8;
  }
  .sock.blue {
    background: #6464d8;
  }
  .sock.green {
    background: #62d162;
  }
  .imgrow {
    height: 15px;
    margin: 2px 7px 0 6px;
    display: flex;
    align-items: stretch;
    line-height: 15px;
    text-align: center;
  }
  .ir-ic {
    width: 17px;
    background: #404040;
    border-radius: 2px 0 0 2px;
    display: flex;
    align-items: center;
    justify-content: center;
  }
  .ir-name {
    width: 20px;
    background: #b3b3b3;
  }
  .ir-2 {
    width: 13px;
    background: #8e8e8e;
  }
  .ir-f {
    width: 10px;
    background: #6a6a6a;
    color: #bbb;
  }
  .ir-fo,
  .ir-x {
    width: 12px;
    background: #8c8c8c;
    display: flex;
    align-items: center;
    justify-content: center;
  }
  .ir-x {
    width: 11px;
    background: #767676;
    border-radius: 0 2px 2px 0;
  }
  .ndrop {
    height: 13px;
    margin: 4.500px 7px 0 6px;
    padding: 0 3px 0 5px;
    display: flex;
    align-items: center;
    justify-content: space-between;
    background: linear-gradient(#3f3f3f, #4a4a4a);
    color: #d2d2d2;
    border-radius: 2px;
  }
  .imgrow + .ndrop {
    margin-top: 4px;
  }
  .vec {
    margin-top: 6px;
    padding-left: 11px;
    height: 16px;
    line-height: 16px;
  }
  .vec .sock {
    left: -4px;
  }
  .rough {
    width: 89px;
    height: 13px;
    margin-top: 1px;
    margin-left: -5px;
    box-sizing: border-box;
    display: flex;
    justify-content: space-between;
    padding: 0 10px;
    line-height: 13px;
    border-radius: 7px;
    background: linear-gradient(90deg, #6b6b6b 19%, #d8d8d8 19%);
  }
  .matlabel {
    position: absolute;
    left: 16px;
    bottom: 13px;
    color: #d8d8d8;
  }
  .hscroll {
    position: absolute;
    left: 3px;
    right: 12px;
    bottom: 3px;
    height: 5px;
    border-radius: 3px;
    background: #a3a3a3;
  }
  .vscroll {
    position: absolute;
    right: 3px;
    top: 4px;
    bottom: 5px;
    width: 5px;
    border-radius: 3px;
    background: #9d9d9d;
  }

  .nside {
    width: 96px;
    flex: none;
    box-sizing: border-box;
    background: #727272;
    border-left: 1px solid #2c2c2c;
    padding: 0 5px 0 6px;
  }
  .ns-h {
    height: 14px;
    display: flex;
    align-items: center;
    gap: 2px;
    position: relative;
    padding-left: 1px;
  }
  .ns-row {
    height: 13px;
    display: flex;
    align-items: center;
    justify-content: space-between;
    padding-left: 3px;
    color: #2c2c2c;
  }
  .ns-row.first {
    margin-top: 4px;
  }
  .ns-f {
    width: 55px;
    height: 10px;
    box-sizing: border-box;
    display: flex;
    align-items: center;
    gap: 2px;
    padding-left: 2px;
    background: #a8a8a8;
    border-radius: 2px;
    border: 1px solid #5a5a5a;
  }
  .ns-sec {
    height: 12px;
    margin-top: 2px;
    display: flex;
    align-items: center;
    gap: 2px;
    border-top: 1px solid #606060;
    position: relative;
    padding-left: 1px;
  }
  .ns-sec + .ns-sec {
    margin-top: 0;
  }
  .ns-txt {
    height: 14px;
    line-height: 14px;
    padding-left: 3px;
    color: #2c2c2c;
  }
  .ns-txt.first {
    margin-top: 9px;
  }
  .gp {
    margin-top: 2px;
  }
  .ns-new {
    display: flex;
    height: 10px;
    margin-top: 4px;
  }
  .pn {
    width: 17px;
    display: flex;
    align-items: center;
    background: #383838;
    border-radius: 2px 0 0 2px;
    padding-left: 1px;
    box-sizing: border-box;
    gap: 1px;
  }
  .nw {
    flex: 1;
    display: flex;
    align-items: center;
    background: linear-gradient(#a0a0a0, #8a8a8a);
    border-radius: 0 2px 2px 0;
  }
  .nw span {
    flex: 1;
    text-align: center;
    padding-right: 9px;
  }

  .q1 {
    width: 20px;
    background: #8e8e8e;
  }
  .hdr-seq .ib {
    width: 10px;
  }
  .q2 {
    margin-left: 3px;
  }
  .hdr-seq .q2 .ib {
    width: 11px;
  }
  .q3 {
    margin-left: 3px;
  }
  .refresh {
    width: 64px;
    height: 10px;
    margin-left: 10px;
    flex: none;
    background: #7f7f7f;
    color: #606060;
    text-align: center;
    line-height: 10px;
    border-radius: 2px;
  }
  .q4 {
    margin-left: 6px;
  }
  .q5 {
    margin-left: 8px;
  }
</style>
